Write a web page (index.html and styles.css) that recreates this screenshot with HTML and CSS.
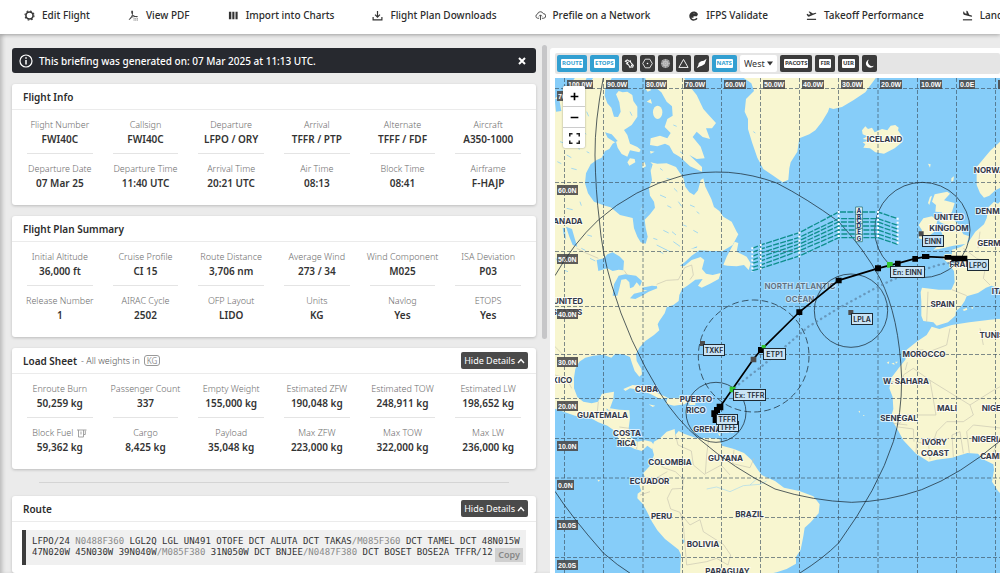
FILE: index.html
```html
<!DOCTYPE html>
<html lang="en">
<head>
<meta charset="utf-8">
<title>Flight Briefing</title>
<link rel="stylesheet" href="styles.css">
</head>
<body>
<nav class="topnav">
  <a href="#"><svg class="ico" viewBox="0 0 12 12"><circle cx="6" cy="6" r="3.9" fill="none" stroke="#333" stroke-width="1.7"/><circle cx="6" cy="6" r="5" fill="none" stroke="#333" stroke-width="1.1" stroke-dasharray="1.9 2.03"/></svg>Edit Flight</a>
  <a href="#"><svg class="ico" viewBox="0 0 12 12"><path d="M1 10.500C3 9.500 5 6 5 2.500C5 .5 3.800 .8 4 2.500C4.400 5 6.500 7.500 10.500 7.200M2.500 8.600C4 7.500 6 7 8 7" fill="none" stroke="#444" stroke-width="1.100"/><path d="M6 9.500h5M6 11h5" stroke="#888" stroke-width="1" stroke-dasharray="1.300 .5"/></svg>View PDF</a>
  <a href="#"><svg class="ico" viewBox="0 0 12 12"><path d="M1 2h2.600v8H1zM4.700 2h2.300v8H4.700zM8.200 2h2.300v8H8.200z" fill="#333"/></svg>Import into Charts</a>
  <a href="#"><svg class="ico" viewBox="0 0 12 12"><path d="M6 1v6.500M3.300 5L6 7.700L8.700 5M1.200 7.500v3.200h9.600V7.500" fill="none" stroke="#333" stroke-width="1.300"/></svg>Flight Plan Downloads</a>
  <a href="#"><svg class="ico" viewBox="0 0 12 12"><path d="M4.500 9H3A2.300 2.300 0 0 1 2.700 4.500A3.300 3.300 0 0 1 9 4A2.500 2.500 0 0 1 9.300 9H7.500M6 11V5.500M4.300 7L6 5.300L7.700 7" fill="none" stroke="#444" stroke-width="1"/></svg>Prefile on a Network</a>
  <a href="#"><svg class="ico" viewBox="0 0 12 12"><path d="M9.800 9A4.200 4.200 0 1 1 10 4.500L9.300 6H2M3 4.300h6.500M3 7.600h3" fill="none" stroke="#333" stroke-width="1.600"/></svg>IFPS Validate</a>
  <a href="#"><svg class="ico" viewBox="0 0 12 12"><path d="M1 10.200h10" stroke="#333" stroke-width="1.300"/><path d="M.6 4.500l1-.3l1.300 1L5 4.500L2.800 1.900l1.300-.3L7.500 3.800L10.400 3c.9-.2 1.200.9.300 1.200L3 7.300L1.900 6.900z" fill="#333"/></svg>Takeoff Performance</a>
  <a href="#"><svg class="ico" viewBox="0 0 12 12"><path d="M1 10.700h10" stroke="#333" stroke-width="1.300"/><path d="M1.300 1.700l1 .3l.7 1.600L5 4.200L4.700.8l1.300.4L7.900 5.100L10.500 6c.9.300.6 1.500-.3 1.300L2 5.100L1.300 4z" fill="#333"/></svg>Landing Performance</a>
</nav>
<main class="layout">
  <section class="brief">
    <div class="alert"><svg class="info" viewBox="0 0 14 14"><circle cx="7" cy="7" r="6" fill="none" stroke="#fff" stroke-width="1.200"/><path d="M7 6v4.500M7 3.300v1.500" stroke="#fff" stroke-width="1.500"/></svg><span>This briefing was generated on: 07 Mar 2025 at 11:13 UTC.</span>
      <button class="close" aria-label="Close"><svg viewBox="0 0 8 8"><path d="M1 1l6 6M7 1L1 7" stroke="#fff" stroke-width="2"/></svg></button></div>

    <article class="card">
      <header><h2>Flight Info</h2></header>
      <dl class="facts">
        <div><dt>Flight Number</dt><dd>FWI40C</dd></div><div><dt>Callsign</dt><dd>FWI40C</dd></div><div><dt>Departure</dt><dd>LFPO / ORY</dd></div><div><dt>Arrival</dt><dd>TFFR / PTP</dd></div><div><dt>Alternate</dt><dd>TFFF / FDF</dd></div><div><dt>Aircraft</dt><dd>A350-1000</dd></div>
        <div><dt>Departure Date</dt><dd>07 Mar 25</dd></div><div><dt>Departure Time</dt><dd>11:40 UTC</dd></div><div><dt>Arrival Time</dt><dd>20:21 UTC</dd></div><div><dt>Air Time</dt><dd>08:13</dd></div><div><dt>Block Time</dt><dd>08:41</dd></div><div><dt>Airframe</dt><dd>F-HAJP</dd></div>
      </dl>
    </article>

    <article class="card">
      <header><h2>Flight Plan Summary</h2></header>
      <dl class="facts">
        <div><dt>Initial Altitude</dt><dd>36,000 ft</dd></div><div><dt>Cruise Profile</dt><dd>CI 15</dd></div><div><dt>Route Distance</dt><dd>3,706 nm</dd></div><div><dt>Average Wind</dt><dd>273 / 34</dd></div><div><dt>Wind Component</dt><dd>M025</dd></div><div><dt>ISA Deviation</dt><dd>P03</dd></div>
        <div><dt>Release Number</dt><dd>1</dd></div><div><dt>AIRAC Cycle</dt><dd>2502</dd></div><div><dt>OFP Layout</dt><dd>LIDO</dd></div><div><dt>Units</dt><dd>KG</dd></div><div><dt>Navlog</dt><dd>Yes</dd></div><div><dt>ETOPS</dt><dd>Yes</dd></div>
      </dl>
    </article>

    <article class="card">
      <header><h2>Load Sheet</h2><span class="sub">- All weights in</span><span class="unit">KG</span><button class="toggle">Hide Details <svg viewBox="0 0 8 6"><path d="M1 5l3-3.500L7 5" fill="none" stroke="#fff" stroke-width="1.400"/></svg></button></header>
      <dl class="facts">
        <div><dt>Enroute Burn</dt><dd>50,259 kg</dd></div><div><dt>Passenger Count</dt><dd>337</dd></div><div><dt>Empty Weight</dt><dd>155,000 kg</dd></div><div><dt>Estimated ZFW</dt><dd>190,048 kg</dd></div><div><dt>Estimated TOW</dt><dd>248,911 kg</dd></div><div><dt>Estimated LW</dt><dd>198,652 kg</dd></div>
        <div><dt>Block Fuel <svg class="fuel" viewBox="0 0 10 9"><path d="M0 1h9.500M1.500 1v7h5V1M6.500 5.500h1.800V1.500M4 2.500v3" fill="none" stroke="#999" stroke-width=".9"/></svg></dt><dd>59,362 kg</dd></div><div><dt>Cargo</dt><dd>8,425 kg</dd></div><div><dt>Payload</dt><dd>35,048 kg</dd></div><div><dt>Max ZFW</dt><dd>223,000 kg</dd></div><div><dt>Max TOW</dt><dd>322,000 kg</dd></div><div><dt>Max LW</dt><dd>236,000 kg</dd></div>
      </dl>
    </article>

    <hr class="rule">

    <article class="card">
      <header><h2>Route</h2><button class="toggle">Hide Details <svg viewBox="0 0 8 6"><path d="M1 5l3-3.500L7 5" fill="none" stroke="#fff" stroke-width="1.400"/></svg></button></header>
      <div class="route"><code>LFPO/24 <i>N0488F360</i> LGL2Q LGL UN491 OTOFE DCT ALUTA DCT TAKAS<i>/M085F360</i> DCT TAMEL DCT 48N015W<br>47N020W 45N030W 39N040W<i>/M085F380</i> 31N050W DCT BNJEE<i>/N0487F380</i> DCT BOSET BOSE2A TFFR/12</code><button class="copy">Copy</button></div>
    </article>
    <div class="thumb"></div>
  </section>

  <section class="mapside">
    <div class="tools">
      <button class="blue"><span>ROUTE</span></button><button class="blue"><span>ETOPS</span></button>
      <button class="sq" aria-label="Airports"><svg viewBox="0 0 12 12"><path d="M1.500 3.500l2-1.500l2 1.500l1.500-.3l.2 1.500l3 3.300l-.7 2l-2-.5l-1 .8L5 7.500L2.800 6.300l1.500-1z" fill="none" stroke="#fff" stroke-width="1.100"/><circle cx="8.500" cy="8" r="1" fill="#fff"/></svg></button>
      <button class="sq" aria-label="Navaids"><svg viewBox="0 0 12 12"><path d="M3.500 1.300h5L11.200 6L8.500 10.700h-5L.8 6z" fill="none" stroke="#fff" stroke-width=".9"/><circle cx="6" cy="6" r=".9" fill="#fff"/></svg></button>
      <button class="sq" aria-label="Radar"><svg viewBox="0 0 12 12"><circle cx="6" cy="6" r="4.900" fill="#999"/><path d="M6 1v10M1 6h10M2.500 2.500l7 7M9.500 2.500l-7 7" stroke="#ccc" stroke-width=".5"/><circle cx="6" cy="6" r="2.500" fill="none" stroke="#ddd" stroke-width=".6"/></svg></button>
      <button class="sq" aria-label="Waypoints"><svg viewBox="0 0 12 12"><path d="M6 1.500L11 10.300H1z" fill="none" stroke="#fff"/></svg></button>
      <button class="sq" aria-label="Weather"><svg viewBox="0 0 12 12"><path d="M11.500 .8L9.500 6.500L6.500 8.500L4 9.200L.8 11.300L2.500 8L3 5.500L5.500 3.500L8.500 3z" fill="#fff"/></svg></button>
      <button class="blue"><span>NATS</span></button>
      <label class="pick"><select aria-label="Track direction"><option>West</option><option>East</option></select><svg viewBox="0 0 6 5"><path d="M0 .5h6L3 4.500z" fill="#333"/></svg></label>
      <button><span>PACOTS</span></button><button><span>FIR</span></button><button><span>UIR</span></button>
      <button class="sq" aria-label="Night mode"><svg viewBox="0 0 12 12"><path d="M5.500 1.500A4.700 4.700 0 1 0 10.800 8.500A4.500 4.500 0 0 1 5.500 1.500z" fill="#fff"/></svg></button>
    </div>
    <div class="map">
      <svg class="chart" viewBox="555 78 445 495" preserveAspectRatio="xMinYMin slice">
        <rect class="sea" x="555" y="78" width="445" height="495"/>
        <g transform="translate(550 45) scale(.33333)">
          <g class="land">
            <path d="M0 170L30 150L45 125L62 118L75 98H186L166 130L164 152L172 175L184 188L192 215L204 216L212 200L208 172L198 148L206 138L218 142L232 140L247 150L250 168L262 185L262 215L245 240L222 255L232 270L240 296L262 306L272 314L268 322L240 316L232 335L215 327L203 308L198 290L188 296L178 312L165 318L155 338L140 345L122 358L108 385L105 415L114 445L132 470L165 482L182 487L210 510L248 519L252 550L262 575L272 592L287 596L293 575L287 548L284 524L300 508L315 488L312 470L300 452L297 430L306 405L302 378L302 352L322 356L350 355L378 366L388 382L400 398L406 425L418 442L432 450L444 436L452 405L460 400L466 425L484 462L492 486L508 498L520 515L545 530L560 560L565 568L548 600L518 618L480 618L448 616L425 632L404 652L390 662L402 664L425 645L452 636L463 645L456 672L468 686L488 690L512 684L506 702L480 716L455 728L444 722L458 702L436 704L412 722L396 733L388 750L386 768L370 780L350 787L344 805L328 828L323 838L328 856L312 870L286 888L268 908L258 928L260 948L274 972L276 988L268 995L254 978L246 955L240 936L220 928L196 926L184 938L160 929L130 932L106 938L88 950L76 972L72 998L72 1030L82 1056L100 1070L125 1075L144 1070L156 1046L192 1040L190 1062L180 1090L208 1094L238 1096L240 1120L236 1150L244 1180L262 1190L285 1186L304 1190L312 1200L305 1212L292 1202L276 1218L254 1212L226 1198L206 1184L198 1160L172 1142L145 1132L120 1118L75 1112L0 1086Z"/>
            <path d="M312 1190L330 1180L350 1160L374 1152L376 1170L386 1158L402 1166L440 1180L476 1178L508 1182L516 1202L552 1212L582 1224L604 1244L622 1272L635 1290L675 1308L702 1328L748 1338L790 1354L809 1378L806 1405L782 1432L764 1448L760 1474L752 1514L738 1536L738 1556L710 1572L680 1582L640 1590H390L393 1530L386 1514L345 1482L322 1456L306 1430L290 1398L278 1376L262 1360L263 1346L274 1338L268 1320L284 1296L280 1284L300 1262L312 1230L306 1208Z"/>
            <path d="M285 98H402L414 118L440 150L460 192L478 212L498 234L486 250L468 250L480 282L458 276L440 260L428 276L452 305L464 340L440 342L418 330L456 366L456 380L420 364L390 336L370 324L358 302L345 296L322 304L300 300L302 280L330 272L352 280L362 264L344 246L352 222L368 212L366 184L350 170L334 142L310 122L292 114Z"/>
            <ellipse cx="323" cy="202" rx="14" ry="20"/><path d="M240 340l14 2l2 10l-18 10l-6-10zM276 354l8-2l4 12l-10 6zM300 318l14 2l-12 6zM285 130l12-6l6 12l-10 4zM290 170l12-8l4 14z"/>
            <path d="M580 98L604 115L612 138L588 162L584 200L594 222L594 252L606 292L622 338L640 372L670 392L684 402L698 412L715 404L718 370L722 352L742 320L748 280L778 268L796 256L815 232L834 200L838 188L850 192L876 186L910 166L946 142L958 125L978 98Z"/>
            <path d="M936 256L946 244L954 252L966 248L974 262L996 252L1012 256L1022 242L1036 240L1046 248L1044 256L1056 274L1056 292L1034 310L1002 326L976 322L960 310L940 308L946 298L938 292L960 286L938 282L952 274L938 268Z"/>
            <path d="M1360 280L1340 300L1322 316L1300 342L1280 366L1280 420L1290 444L1302 458L1318 452L1336 436L1360 424ZM1310 520L1316 486L1332 470L1344 476L1360 460V732L1346 730L1324 722L1308 728L1284 744L1250 754L1244 768L1232 786L1218 798L1216 812L1194 832L1160 842L1150 832L1120 828L1114 812L1114 770L1112 742L1116 728L1166 734L1204 734L1214 712L1212 678L1196 656L1178 640L1184 628L1206 628L1206 614L1232 606L1256 590L1276 560L1302 538Z"/>
            <path d="M1154 448L1192 440L1200 446L1182 466L1214 474L1206 500L1198 512L1222 534L1240 568L1258 574L1250 596L1210 602L1168 612L1150 614L1176 594L1158 586L1178 570L1170 552L1188 540L1168 530L1176 502L1156 500L1158 480L1146 470ZM1120 520L1146 514L1162 528L1152 562L1120 584L1106 580L1116 556L1106 540ZM1140 455l6-3l-8 28l-4-6zM1204 400l8-6l-2 14l-6 2zM1134 356l8 2l-2 10z"/>
            <path d="M1145 845L1168 852L1205 840L1258 832L1320 824L1360 820V1354L1344 1338L1326 1310L1332 1274L1330 1258L1302 1244L1284 1226L1252 1224L1206 1238L1160 1244L1136 1250L1098 1226L1060 1186L1042 1152L1022 1118L1030 1092L1028 1056L1018 1030L1024 998L1044 972L1066 944L1070 914L1100 890L1130 870Z"/>
            <path d="M520 660L530 635L554 590L565 594L560 620L590 635L602 655L596 675L582 660L560 664L532 662ZM220 1032L248 1020L286 1024L322 1044L354 1058L330 1062L300 1046L266 1034L240 1030L226 1038ZM352 1060L388 1058L412 1070L404 1078L372 1082L348 1076ZM418 1072h18v8h-18zM296 1078l20 4l-8 4zM504 1164l8 2l-4 8zM142 1304l8 2l-4 4z"/>
            <path d="M1238 794l12-6l2 6l-10 4zM1262 788l8-2l-2 6zM1010 953l8-4l-2 8zM1024 956l8-3l2 6zM1036 950l8 0l-6 6zM925 1100l5-3v6zM940 1110l5 3h-6z"/>
          </g>
          <g class="water">
            <path d="M12 98h28l12 14l-24 18l-16 6zM110 98l20 0l-14 20l-20 14zM14 160l14 4l6 34l-16 2zM140 645L162 640L172 628L188 622L208 634L222 648L220 676L206 674L188 678L172 670L145 678ZM188 752L192 718L206 692L226 688L258 692L276 708L270 724L260 712L250 726L240 730L238 712L228 702L214 704L208 730L202 752ZM240 760L252 746L286 738L320 722L322 730L296 740L280 750L256 762ZM276 728l30-6l14 2l-4 8l-34 4zM48 545L66 552L74 580L82 605L68 600L58 575ZM38 548l6 2l4 34l-6-10zM165 262l20 6l18 20l-8 4l-22-14zM300 352l8 6l-6 20z"/>
            <path d="M1288 762l8 10l-4 30l-10-8zM1322 745l38 45v30l-20 2l10-30zM170 1090l8 8l-8-2zM396 1480l8 8l-4 8zM422 612l20-8l-2 4z"/>
            <g class="specks"><path d="M40 250l10 4M60 230l6 12M30 290l12 4M50 330l14 8M22 350l12 6M64 370l16 4M84 300l4 14M100 260l8 8M64 430l10 6M90 470l4 12M50 490l18 4M110 320l8 4M330 370l8 6M350 400l14 4M372 430l10 10M330 450l18 8M352 482l12 6M385 470l10 14M420 480l14 6M440 500l8 6M310 580l12 4M340 556l16 8M366 560l12 10M400 540l10 4M430 556l14 8M330 620l10 6M94 610l12 6M120 640l16 8M112 570l14 4M18 640l8 14M44 676l10 4M390 320l10 8M370 240l10 4M240 200l6 12M110 200l6 14M82 150l10 6M60 200l14 6M610 260l6 4M270 498l8-14M290 500l-8 12M320 600l40 20M370 590l20 14"/></g>
          </g>
          <g class="borders">
            <path d="M80 610L110 625L145 640M222 676L232 690M320 718L350 706L385 704L404 668L425 660L430 690L420 704M15 905L40 930M15 990L50 1000L65 1030M145 1070L142 1100L160 1118M180 1094L176 1112M208 1146L238 1150M262 1190L260 1212M376 1168L384 1200L424 1218L430 1260L466 1290M312 1240L340 1268L376 1280L400 1302L398 1330L366 1332L352 1360L362 1392L390 1402L400 1440M476 1182L470 1230L466 1286L514 1260L520 1240M552 1214L548 1256L600 1268L612 1240M515 1262L540 1290M390 1404L420 1440L450 1424L460 1460L520 1498L542 1530L534 1560L500 1540L470 1550L410 1560L400 1440M280 1296L310 1304L352 1280M270 1350L300 1340"/>
            <path d="M1070 920L1120 914M1024 1010H1060V990L1090 970L1140 1006M1072 952L1066 975M1140 1006L1260 1080M1140 1006L1158 1110H1072L1044 1140M1138 920L1190 900L1200 850M1260 1080L1270 1110L1240 1130L1190 1130L1160 1160L1150 1190M1210 1236L1206 1170L1230 1160L1240 1225M1258 1224L1250 1160L1270 1140L1360 1150M1140 1244L1136 1200L1100 1190L1098 1224M1044 1146L1090 1152L1092 1190M1030 1135L1072 1140M1134 740L1130 830M1206 734L1250 752M1240 610L1280 640L1310 650L1300 700L1320 720M1290 560L1284 610M1260 1080L1330 1036L1360 1020M1290 850L1300 900M1320 1244L1340 1200L1360 1160"/>
            <path class="river" d="M470 1332L500 1326L540 1340L580 1322L630 1318L650 1308M600 1320L620 1302"/>
          </g>
        </g>
        <path class="grid" d="M564.500 78V573M603.500 78V573M643 78V573M682.500 78V573M721.500 78V573M760.500 78V573M799.500 78V573M838.500 78V573M878 78V573M917.500 78V573M956.500 78V573M995.500 78V573M555 88.500H1000M555 182.500H1000M555 251.500H1000M555 306.500H1000M555 354.500H1000M555 398.500H1000M555 438.500H1000M555 478H1000M555 517.500H1000M555 557.500H1000"/>
        <g class="places">
          <text x="884.500" y="142">ICELAND</text><text x="992" y="173">NORWAY</text><text x="996" y="214">DENMARK</text><text x="949" y="220">UNITED</text><text x="949" y="231">KINGDOM</text><text x="998" y="246">GERMANY</text><text x="966" y="267">FRANCE</text><text x="942.500" y="307">SPAIN</text><text x="1003" y="294">ITALY</text><text x="996" y="338">TUNISIA</text><text x="924" y="357">MOROCCO</text><text x="906" y="384">W. SAHARA</text><text x="899" y="421">SENEGAL</text><text x="947" y="411">MALI</text><text x="994" y="411">NIGER</text><text x="934.500" y="445">IVORY</text><text x="935" y="456">COAST</text><text x="988" y="442">NIGERIA</text><text x="1004" y="459">CAMEROON</text>
          <text x="565" y="224">CANADA</text><text x="568" y="304">UNITED</text><text x="567" y="315">STATES</text><text x="556" y="383">MEXICO</text><text x="646.500" y="392">CUBA</text><text x="696" y="402">PUERTO</text><text x="696" y="413">RICO</text><text x="713" y="432">GRENADA</text><text x="602.500" y="418">GUATEMALA</text><text x="627" y="436">COSTA</text><text x="626.500" y="446">RICA</text><text x="670" y="465">COLOMBIA</text><text x="725.500" y="461">GUYANA</text><text x="649.500" y="484">ECUADOR</text><text x="661.500" y="519">PERU</text><text x="749.500" y="517">BRAZIL</text><text x="703" y="547">BOLIVIA</text><text x="727.500" y="574">PARAGUAY</text>
          <g class="ocean"><text x="800" y="289">NORTH ATLANTIC</text><text x="800" y="302">OCEAN</text></g>
        </g>
        <g class="deg">
          <path d="M567 80h26v9h-26zM606 80h22v9h-22zM645 80h22v9h-22zM684 80h22v9h-22zM724 80h22v9h-22zM763 80h22v9h-22zM802 80h22v9h-22zM841 80h22v9h-22zM880 80h22v9h-22zM920 80h22v9h-22zM959 80h16v9h-16zM998 80h16v9h-16zM557 91h21v10h-21zM557 185h21v10h-21zM557 254h21v10h-21zM557 309h21v10h-21zM557 357h21v10h-21zM557 401h21v10h-21zM557 441h21v10h-21zM557 480h17v10h-17zM557 520h21v10h-21zM557 560h21v10h-21z"/>
          <text x="568" y="87">100.0W</text><text x="607" y="87">90.0W</text><text x="646" y="87">80.0W</text><text x="685" y="87">70.0W</text><text x="725" y="87">60.0W</text><text x="764" y="87">50.0W</text><text x="803" y="87">40.0W</text><text x="842" y="87">30.0W</text><text x="881" y="87">20.0W</text><text x="921" y="87">10.0W</text><text x="960" y="87">0.0E</text>
          <text x="558" y="99">70.0N</text><text x="558" y="193">60.0N</text><text x="558" y="262">50.0N</text><text x="558" y="317">40.0N</text><text x="558" y="365">30.0N</text><text x="558" y="409">20.0N</text><text x="558" y="449">10.0N</text><text x="558" y="488">0.0N</text><text x="558" y="528">10.0S</text><text x="558" y="568">20.0S</text>
        </g>
        <g transform="translate(550 45) scale(.33333)">
          <g class="range">
            <path d="M15 692Q70 595 145 525Q250 430 397 392Q458 378 535 382Q610 388 680 414Q770 460 866 530Q945 615 990 700Q1048 815 1055 1000Q1055 1110 1030 1190Q985 1330 866 1494Q820 1540 750 1584M15 1339Q60 1410 160 1524Q200 1560 248 1590"/>
            <path d="M160 98Q134 230 135 330Q137 440 148 525Q155 620 185 720Q235 890 330 1044Q380 1125 450 1184Q550 1270 675 1332Q790 1368 905 1372Q1010 1370 1115 1334Q1230 1290 1350 1188"/>
            <circle cx="903" cy="797" r="110"/><circle cx="1117" cy="555" r="143"/><circle cx="498" cy="1102" r="90"/>
            <ellipse class="dash" cx="611" cy="933" rx="166" ry="168"/>
          </g>
          <g class="tracks">
            <path id="nat" d="M607 610L632 600L748 563L866 501H984L1043 521M607 622L632 612L748 577L866 521H984L1043 541M607 634L632 624L748 587L866 531H984L1043 552M607 645L632 636L748 597L866 543H984L1043 563M607 655L632 648L748 607L866 555H984L1043 575M607 667L632 660L748 617L866 567H984L1043 586M607 677L632 670L748 633L866 578H984L1043 598"/>
            <path class="dots" d="M607 607V680M632 597V673M748 560V636M866 498V581M984 498V581M1043 518V601"/>
          </g>
          <path class="direct" d="M555 1027L640 960L705 905L775 845L865 790L975 730L1030 703L1165 660L1240 646"/>
          <path class="track" d="M1250 642L1195 638L1128 635L1095 641L1043 655L984 670L866 706L748 801L633 915L610 943L547 1033L510 1086L492 1104L495 1130"/>
          <path class="fix" d="M1184 630h20v14h-20zM1204 632h48v17h-48zM1116 627h22v15h-22zM1087 633h17v17h-17zM1035 647h17v17h-17zM975 661h18v18h-18zM857 698h18v17h-18zM739 793h18v17h-18zM624 906h19v18h-19zM500 1076h20v20h-20zM492 1086h18v18h-18zM484 1096h20v20h-20zM488 1110h16v24h-16z"/>
          <path class="alt" d="M602 935h17v17h-17zM1106 559h15v15h-15zM895 795h15v15h-15zM450 888h15v15h-15z"/>
          <path class="etp" d="M1011 651h17v17h-17zM635 900h12v10h-12zM539 1025h17v17h-17z"/>
          <g class="trackname"><path d="M917 486h20v104h-20zM917 508h20M917 522h20M917 536h20M917 550h20M917 568h20"/><text x="927" y="505">A</text><text x="927" y="521">B</text><text x="927" y="535">C</text><text x="927" y="549">D</text><text x="927" y="566">E</text><text x="927" y="587">G</text></g>
        </g>
        <g class="tag">
          <rect x="718.500" y="421.500" width="20" height="10"/><text x="728.500" y="430">TFFF</text>
          <rect x="716.500" y="414.500" width="21" height="10"/><text x="727" y="422">TFFR</text>
          <rect x="922.500" y="235.500" width="21" height="11"/><text x="933" y="244">EINN</text>
          <rect x="890.500" y="266.500" width="34" height="11"/><text x="907.500" y="275">En: EINN</text>
          <rect x="967.500" y="259.500" width="21" height="11"/><text x="978" y="268">LFPO</text>
          <rect x="851.500" y="313.500" width="21" height="11"/><text x="862" y="322">LPLA</text>
          <rect x="763.500" y="348.500" width="22" height="11"/><text x="774.500" y="357">ETP1</text>
          <rect x="703.500" y="344.500" width="21" height="11"/><text x="714" y="353">TXKF</text>
          <rect x="733.500" y="389.500" width="32" height="11"/><text x="749.500" y="398">Ex: TFFR</text>
        </g>
      </svg>
      <div class="zoom">
        <button aria-label="Zoom in"><svg viewBox="0 0 10 10"><path d="M5 1.500v7M1.500 5h7" stroke="#000" stroke-width="1.500"/></svg></button>
        <button aria-label="Zoom out"><svg viewBox="0 0 10 10"><path d="M1.500 5h7" stroke="#000" stroke-width="1.500"/></svg></button>
        <button aria-label="Full screen"><svg viewBox="0 0 10 10"><path d="M.7 3.200V.7h2.500M6.800 .7h2.500v2.500M9.300 6.800v2.500H6.800M3.200 9.300H.7V6.800" fill="none" stroke="#222" stroke-width="1.400"/></svg></button>
      </div>
    </div>
  </section>
</main>
</body>
</html>
```
FILE: styles.css
```css
* { box-sizing: border-box; }
body {
  margin: 0;
  height: 100vh;
  overflow: hidden;
  display: flex;
  flex-direction: column;
  background: #ebebeb;
  color: #333;
  font-family: "Noto Sans", "Open Sans", sans-serif;
  font-size: 10px;
}
button, select { font: inherit; margin: 0; border: 0; padding: 0; }
svg { display: block; flex: none; }

.topnav {
  flex: none;
  height: 34px;
  padding: 0 24px 4px;
  display: flex;
  align-items: center;
  gap: 38px;
  background: #fff;
  box-shadow: 0 1px 4px rgba(0, 0, 0, .3);
  white-space: nowrap;
  overflow: hidden;
  z-index: 1;
}
.topnav a {
  flex: none;
  display: flex;
  align-items: center;
  gap: 7px;
  color: #2c2c2c;
  font-size: 10px;
  font-weight: 500;
  text-decoration: none;
}
.ico { width: 11px; height: 11px; }

.layout {
  flex: 1;
  min-height: 0;
  display: grid;
  grid-template-columns: 55% 1fr;
}
.brief {
  position: relative;
  min-width: 0;
  overflow: hidden;
  padding: 14px 14px 0 12px;
  display: flex;
  flex-direction: column;
  gap: 11px;
  box-shadow: inset 4px 0 4px -2px rgba(0, 0, 0, .22);
}
.brief > * { flex: none; }
.thumb {
  position: absolute;
  right: 3px;
  top: 11px;
  width: 5px;
  height: 294px;
  border-radius: 3px;
  background: #c6c6c8;
}

.alert {
  height: 25px;
  padding: 0 10px 0 7px;
  display: flex;
  align-items: center;
  gap: 6px;
  background: #27292f;
  border-radius: 3px;
  color: #fff;
  font-weight: 500;
}
.info { width: 14px; height: 14px; }
.close { margin-left: auto; background: none; }
.close svg { width: 8px; height: 8px; }

.card {
  background: #fff;
  border-radius: 3px;
  box-shadow: 0 1px 3px rgba(0, 0, 0, .2);
}
.card header {
  height: 26px;
  padding: 0 8px 0 11px;
  display: flex;
  align-items: center;
  border-bottom: 1px solid #ebebeb;
}
.card h2 { margin: 0; font-size: 10px; font-weight: 600; color: #2c2c2c; }
.sub { margin-left: 4px; font-size: 9px; font-weight: 300; color: #555; }
.unit {
  margin-left: 4px;
  padding: 0 2px;
  border: 1px solid #999;
  border-radius: 3px;
  color: #999;
  font-size: 8px;
  line-height: 9px;
}
.toggle {
  margin-left: auto;
  height: 17px;
  padding: 0 3px;
  display: flex;
  align-items: center;
  gap: 2px;
  background: #4a4a4a;
  color: #fff;
  border-radius: 2px;
  font-size: 9px;
}
.toggle svg { width: 8px; height: 6px; }

.facts {
  margin: 0;
  padding: 0 5px 7px;
  display: grid;
  grid-template-columns: repeat(6, 1fr);
  text-align: center;
}
.facts div {
  height: 44px;
  padding-top: 9px;
  border-bottom: 1px solid transparent;
  border-image: linear-gradient(90deg, transparent 13%, #e4e4e4 13%, #e4e4e4 87%, transparent 87%) 1;
}
.facts div:nth-child(n+7) { border-image: none; }
.facts dt {
  display: flex;
  justify-content: center;
  align-items: center;
  gap: 4px;
  color: #6c6c6c;
  font-size: 9px;
  font-weight: 300;
  line-height: 12px;
  white-space: nowrap;
}
.facts dd { margin: 0; font-weight: 600; line-height: 17px; white-space: nowrap; }
.fuel { width: 10px; height: 9px; }

.rule {
  width: calc(100% - 54px);
  margin: 2px auto;
  border: 0;
  border-top: 1px solid #d4d4d4;
}
.route {
  position: relative;
  margin: 8px 10px;
  padding: 6px 0 7px 6px;
  border-left: 4px solid #3c3c3c;
  background: #f0f0f0;
  white-space: nowrap;
  overflow: hidden;
}
.route code {
  display: block;
  font-family: "DejaVu Sans Mono", monospace;
  font-size: 9px;
  line-height: 11px;
  color: #333;
}
.route i { font-style: normal; color: #8a8a8a; }
.copy {
  position: absolute;
  right: 3px;
  bottom: 3px;
  height: 14px;
  padding: 0 3px;
  background: #d0d0d0;
  color: #888;
  font-size: 9px;
  font-weight: 600;
  line-height: 14px;
}

.mapside {
  min-width: 0;
  margin-top: 14px;
  padding: 5px 0 0 5px;
  display: flex;
  flex-direction: column;
  gap: 4px;
  background: #fff;
  border-radius: 3px 0 0 0;
}
.tools {
  flex: none;
  height: 21px;
  padding-left: 2px;
  display: flex;
  align-items: center;
  gap: 3px;
  background: #e5e5e5;
  border-radius: 2px;
}
.tools button {
  height: 17px;
  padding: 0 4px;
  background: #3b3b3b;
  color: #3b3b3b;
  border-radius: 2px;
}
.tools button span {
  display: block;
  padding: 0 1px;
  background: #fff;
  border-radius: 1px;
  font-size: 6px;
  font-weight: 700;
  line-height: 9px;
}
.tools .blue { background: #329fd1; color: #329fd1; }
.tools .sq { width: 15px; padding: 0 2px; }
.sq svg { width: 11px; height: 11px; }
.pick {
  position: relative;
  width: 37px;
  height: 17px;
}
.pick select {
  appearance: none;
  width: 100%;
  height: 100%;
  padding-left: 4px;
  background: #fff;
  border-radius: 2px;
  color: #333;
  font-size: 9px;
}
.pick svg { position: absolute; right: 4px; top: 6px; width: 6px; height: 5px; pointer-events: none; }

.map { position: relative; flex: 1; min-height: 0; overflow: hidden; }
.chart { width: 100%; height: 100%; }
.zoom {
  position: absolute;
  left: 8px;
  top: 8px;
  width: 22px;
  display: grid;
  gap: 1px;
  background: #ccc;
  border-radius: 2px;
  box-shadow: 0 0 2px rgba(0, 0, 0, .4);
  overflow: hidden;
}
.zoom button {
  height: 20px;
  display: grid;
  place-items: center;
  background: #fff;
}
.zoom svg { width: 11px; height: 11px; }

.sea { fill: #86cdf9; }
.land { fill: #f8f6d0; }
.water { fill: #86cdf9; }
.specks { fill: none; stroke: #a3d8ef; stroke-width: 3; }
.borders { fill: none; stroke: #c9c5b2; stroke-width: 2; }
.borders .river { stroke: #a8d9ee; }
.grid { fill: none; stroke: #3c5060; stroke-opacity: .65; stroke-dasharray: 4 2; }
.places {
  fill: #333849;
  font: 700 8px Inter, sans-serif;
  text-anchor: middle;
}
.places text { stroke: #fff; stroke-opacity: .7; stroke-width: 2px; paint-order: stroke; }
.ocean { fill: #5f6d7c; font-weight: 600; }
.ocean text { stroke-opacity: .4; }
.deg path { fill: #4b4b4b; fill-opacity: .9; }
.deg text { fill: #fff; font: 700 7px "Liberation Sans", sans-serif; }
.range { fill: none; stroke: #1c2b36; stroke-opacity: .75; stroke-width: 3; }
.dash { stroke-dasharray: 20 10; }
.tracks { fill: none; stroke: #0f8f8d; stroke-width: 4; stroke-dasharray: 18 4; }
.tracks .dots { stroke: #fff; stroke-width: 6; stroke-dasharray: 6 6; }
.direct { fill: none; stroke: #5d87a8; stroke-opacity: .75; stroke-width: 7; stroke-linecap: round; stroke-dasharray: 1 14; }
.track { fill: none; stroke: #000; stroke-width: 5; }
.fix { fill: #000; }
.alt { fill: #4d4d4d; }
.etp { fill: #2fc52f; }
.trackname path { fill: #eefaf9; stroke: #125f5f; stroke-width: 2; }
.trackname text { fill: #125; font: 700 18px Inter, sans-serif; text-anchor: middle; }
.tag rect { fill: #c9e3f5; stroke: #1d2a33; }
.tag text { fill: #1d2a33; font: 600 7px Inter, sans-serif; text-anchor: middle; }
```
